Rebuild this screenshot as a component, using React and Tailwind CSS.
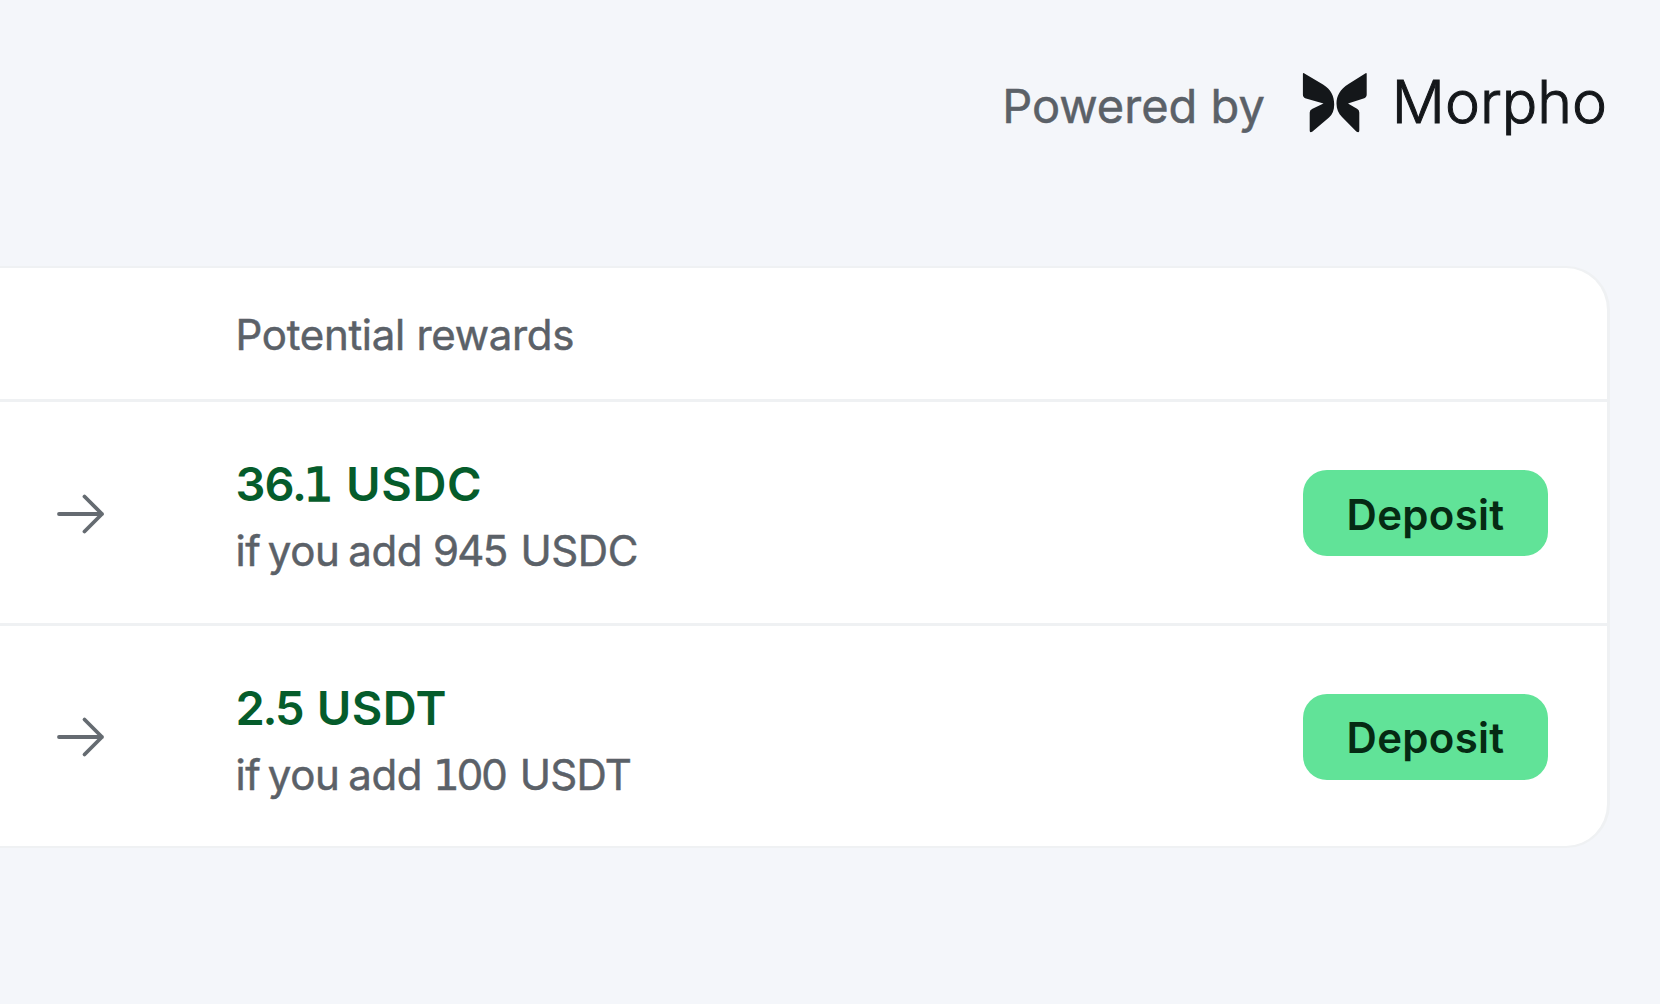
import React from "react";

const rows = [
  {
    id: "usdc",
    reward: (
      <>
        <span className="tracking-[-1px]">36.</span>
        <One bold />
        <span className="ml-[12.5px] tracking-[0.7px]">USDC</span>
      </>
    ),
    amount: <span className="ml-[2px] tracking-[-1.8px]">945</span>,
    token: <span className="ml-[14px]">USDC</span>,
  },
  {
    id: "usdt",
    reward: (
      <>
        <span className="tracking-[-2.2px]">2.5</span>
        <span className="ml-[14.5px] tracking-[0.4px]">USDT</span>
      </>
    ),
    amount: (
      <span className="ml-[2px] tracking-[-2px]">
        <One />
        00
      </span>
    ),
    token: <span className="ml-[14px] tracking-[-0.8px]">USDT</span>,
  },
];

function One({ bold }) {
  return (
    <span
      className={
        bold
          ? "ml-[-2.5px] font-['DejaVu_Sans'] font-normal tracking-normal [-webkit-text-stroke:1.4px_currentColor]"
          : "font-['DejaVu_Sans'] tracking-[-3px]"
      }
    >
      1
    </span>
  );
}

function Butterfly() {
  return (
    <svg className="h-[62px] w-[66px]" viewBox="0 0 66 62" fill="#14171a">
      <path d="M2 1.2 L21 12.5 C29 17.5 32.2 24 32.2 32.5 C32.2 38 30.5 42.5 27 45.5 L10.5 59.5 Q7.7 61.5 7.7 58.5 V40.5 Q7.7 38 10.5 36.8 L21.5 31.5 L4 26.6 Q0.9 25.5 0.9 22.5 V2 Q0.9 0.6 2 1.2 Z" />
      <path d="M63.6 1.2 L46.5 12 C38 17.5 34.5 24 34.5 31.5 C34.5 37 36.5 41.5 40 45 L54.3 59.5 Q57.3 61.5 57.3 58.5 V40.5 Q57.3 38 55 36.8 L46 31.5 L61.5 26.6 Q64.7 25.5 64.7 22.5 V2 Q64.7 0.6 63.6 1.2 Z" />
    </svg>
  );
}

function Arrow() {
  return (
    <svg
      className="mt-[3px] h-[44px] w-[50px] shrink-0"
      viewBox="0 0 50 44"
      fill="none"
      stroke="#656b71"
      strokeWidth="3.8"
      strokeLinecap="round"
      strokeLinejoin="round"
    >
      <path d="M3 22H46M28.5 4.5L46 22L28.5 39.5" />
    </svg>
  );
}

export default function App() {
  return (
    <div className="h-[1004px] w-[1660px] overflow-hidden bg-[#f4f6fa] font-[Inter,sans-serif]">
      <header className="flex h-[266px] items-start justify-end pr-[53px]">
        <span className="mt-[78px] mr-[37px] text-[47px] leading-[56px] text-[#5b6168] [-webkit-text-stroke:0.5px_currentColor]">
          Powered by
        </span>
        <div className="mt-[72px]">
          <Butterfly />
        </div>
        <span className="mt-[66px] ml-[24px] text-[59px] leading-[72px] font-light text-[#14171a] [-webkit-text-stroke:1px_currentColor]">
          Morpho
        </span>
      </header>

      <section className="mr-[50px] rounded-r-[44px] border-y-2 border-r-[3px] border-[#eff1f3] bg-white">
        <div className="flex h-[131px] items-center pt-[2px] pl-[235.5px] text-[42px] tracking-[-0.3px] text-[#5b6168] [-webkit-text-stroke:0.5px_currentColor]">
          Potential rewards
        </div>
        {rows.map((row) => (
          <div key={row.id} className="flex h-[223.5px] items-center border-t-[3px] border-[#eff1f3] pr-[59px]">
            <div className="ml-[56px] w-[179.5px]">
              <Arrow />
            </div>
            <div className="flex-1 pt-[10px] whitespace-nowrap">
              <div className="h-[68px] text-[47px] leading-[68px] font-semibold text-[#055c2b]">{row.reward}</div>
              <div className="h-[66px] text-[42px] leading-[66px] tracking-[-0.4px] text-[#5b6168] [-webkit-text-stroke:0.5px_currentColor]">
                <span className="[word-spacing:-2.5px]">
                  <span className="mr-[-1.5px]">if</span> you add {row.amount}
                </span>
                {row.token}
              </div>
            </div>
            <button className="mt-[2px] h-[86px] w-[245px] rounded-[24px] bg-[#61e398] pt-[2px] text-[42px] font-semibold tracking-[0.3px] text-[#052a13]">
              Deposit
            </button>
          </div>
        ))}
      </section>
    </div>
  );
}
